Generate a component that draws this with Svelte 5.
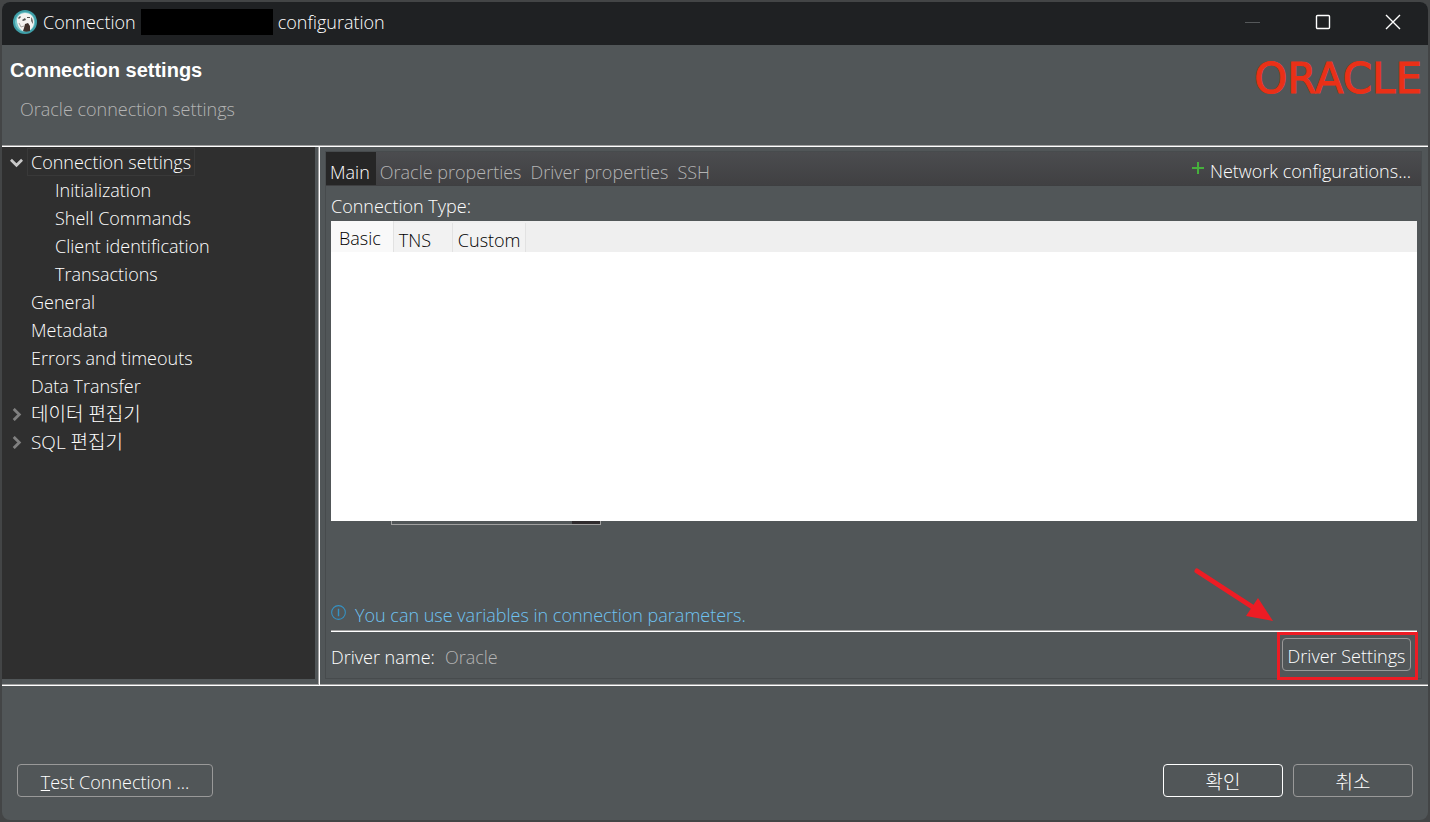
<script>
  const tree = [
    {
      label: 'Connection settings',
      open: true,
      selected: true,
      children: ['Initialization', 'Shell Commands', 'Client identification', 'Transactions']
    },
    { label: 'General' },
    { label: 'Metadata' },
    { label: 'Errors and timeouts' },
    { label: 'Data Transfer' },
    { label: '데이터 편집기', open: false, korean: true },
    { label: 'SQL 편집기', open: false, korean: true }
  ];

  const pages = ['Main', 'Oracle properties', 'Driver properties', 'SSH'];
  const types = ['Basic', 'TNS', 'Custom'];

  let page = $state('Main');
  let type = $state('Basic');
</script>

<div class="backdrop">
  <main class="dialog">
    <header class="titlebar">
      <svg class="app-icon" viewBox="0 0 24 24" aria-hidden="true">
        <circle cx="12" cy="12" r="12" fill="#3f9fa8" />
        <circle cx="12" cy="12" r="10" fill="#7cc8cc" />
        <path d="M4 12C3 7 7 3 12 3c6 0 9 4 9 9 0 4-2 7-5 9l-6 0C6 19 5 16 4 12Z" fill="#f4f2f0" />
        <path d="M5 8l2-2 1 1-2 2ZM9 10l3-2 1 2-3 1ZM14 7l3 0 0 1-3 0Z" fill="#51504f" />
        <path d="M18 7c2 2 2 4 2 7l-2-3Z" fill="#77716e" />
        <path d="M12 14l3-1 2 3 0 5c-3 1-5 1-7 0l1-3Z" fill="#40302b" />
        <path d="M6 13l2 4 3-1" fill="none" stroke="#a8a5a2" />
      </svg>
      <h1 class="title">
        <span>Connection</span>
        <span class="redacted"></span>
        <span>configuration</span>
      </h1>
      <div class="window-buttons">
        <button aria-label="Minimize" disabled>
          <svg viewBox="0 0 16 16"><path d="M0 8.500h15" stroke="#55585a" /></svg>
        </button>
        <button aria-label="Maximize">
          <svg viewBox="0 0 16 16"><rect x="1.500" y="1.500" width="13" height="13" rx="1" stroke="#fff" stroke-width="1.400" /></svg>
        </button>
        <button aria-label="Close">
          <svg viewBox="0 0 16 16"><path d="M1 1l14 14M15 1L1 15" stroke="#fff" stroke-width="1.400" /></svg>
        </button>
      </div>
    </header>

    <section class="banner">
      <div>
        <h2>Connection settings</h2>
        <p>Oracle connection settings</p>
      </div>
      <span class="logo">ORACLE</span>
    </section>

    <div class="body">
      <nav class="tree">
        <ul>
          {#each tree as node}
            <li>
              <button class="node">
                <span class="twisty">
                  {#if node.open}
                    <svg viewBox="0 0 14 14"><path d="M1 4l6 6 6-6" stroke="#c8c8c8" stroke-width="3" /></svg>
                  {:else if node.open === false}
                    <svg viewBox="0 0 14 14"><path d="M4 1l6 6-6 6" stroke="#808080" stroke-width="3" /></svg>
                  {/if}
                </span>
                <span class="label" class:selected={node.selected} class:korean={node.korean}>{node.label}</span>
              </button>
              {#if node.children}
                <ul>
                  {#each node.children as child}
                    <li><button class="node child">{child}</button></li>
                  {/each}
                </ul>
              {/if}
            </li>
          {/each}
        </ul>
      </nav>

      <section class="editor">
        <div class="folder">
          <div class="tabbar">
            <div class="tabs" role="tablist">
              {#each pages as name}
                <button role="tab" aria-selected={page === name} class:active={page === name} onclick={() => (page = name)}>{name}</button>
              {/each}
            </div>
            <button class="network">
              <svg viewBox="0 0 12 12"><path d="M6 0v12M0 6h12" stroke="#46b03c" stroke-width="2" /></svg>
              Network configurations...
            </button>
          </div>

          <div class="page">
            <div class="caption">Connection Type:</div>
            <div class="type-panel">
              <div class="type-tabs" role="tablist">
                {#each types as name}
                  <button role="tab" aria-selected={type === name} class:active={type === name} onclick={() => (type = name)}>{name}</button>
                {/each}
              </div>
            </div>
            <div class="combo-edge"><span></span></div>

            <a class="hint" href="#variables">
              <svg viewBox="0 0 14 14">
                <circle cx="7" cy="7" r="6.400" stroke="#3592c4" />
                <path d="M7 3.500v7" stroke="#3592c4" stroke-width="1.300" />
              </svg>
              You can use variables in connection parameters.
            </a>

            <div class="driver">
              <span>Driver name:</span>
              <span class="driver-name">Oracle</span>
              <div class="callout">
                <button class="btn">Driver Settings</button>
                <svg class="arrow" viewBox="0 0 82 56" aria-hidden="true">
                  <path d="M3 3L60 40" stroke="#ed1c24" stroke-width="5" stroke-linecap="round" />
                  <path d="M79 53L52 48 64 30Z" fill="#ed1c24" />
                </svg>
              </div>
            </div>
          </div>
        </div>
      </section>
    </div>

    <footer class="actions">
      <button class="btn test"><u>T</u>est Connection ...</button>
      <button class="btn primary korean">확인</button>
      <button class="btn korean">취소</button>
    </footer>
  </main>
</div>

<style>
  :global(body) {
    background: #434546;
  }
  .backdrop {
    box-sizing: border-box;
    display: flex;
    min-height: 100vh;
    padding: 2px;
    color: #fff;
    font: 300 18px/28px "Open Sans", "Noto Sans CJK KR", sans-serif;
  }
  .dialog {
    flex: 1;
    min-width: 0;
    display: flex;
    flex-direction: column;
    background: #515658;
    border-radius: 8px;
    overflow: hidden;
  }
  svg {
    display: block;
    flex-shrink: 0;
    fill: none;
  }
  button {
    margin: 0;
    padding: 0;
    border: 0;
    background: none;
    color: inherit;
    font: inherit;
    white-space: nowrap;
  }
  ul {
    margin: 0;
    padding: 0;
    list-style: none;
  }

  .titlebar {
    box-sizing: border-box;
    display: flex;
    align-items: center;
    height: 43px;
    padding: 0 0 3px 11px;
    background: #1f2123;
  }
  .app-icon {
    width: 24px;
    height: 24px;
    margin-right: 6px;
  }
  .title {
    display: flex;
    align-items: center;
    gap: 5px;
    margin: 0;
    font: inherit;
  }
  .redacted {
    width: 132px;
    height: 26px;
    background: #000;
  }
  .window-buttons {
    display: flex;
    margin-left: auto;
  }
  .window-buttons button {
    display: grid;
    place-items: center;
    width: 70px;
    height: 40px;
  }
  .window-buttons svg {
    width: 16px;
    height: 16px;
  }

  .banner {
    display: flex;
    justify-content: space-between;
    height: 101px;
    padding: 0 6px 0 8px;
    border-bottom: 1px solid #fff;
    box-shadow: inset 0 -1px #a0a0a0;
  }
  .banner h2 {
    margin: 11px 0;
    font: bold 20px/28px "Liberation Sans", sans-serif;
  }
  .banner p {
    margin: 0 10px;
    color: #b4b4b4;
  }
  .logo {
    margin-top: 14px;
    color: #ea3017;
    font: 42px/40px "DejaVu Sans", sans-serif;
    -webkit-text-stroke: 1px #ea3017;
  }

  .body {
    flex: 1;
    display: flex;
    border-bottom: 1px solid #fff;
    box-shadow: inset 0 -1px #a0a0a0;
  }
  .tree {
    box-sizing: border-box;
    flex: 0 0 313px;
    margin: 0 4px 6px 0;
    padding-top: 1px;
    background: #2f2f2f;
  }
  .node {
    display: flex;
    align-items: center;
    width: 100%;
    height: 28px;
    text-align: left;
  }
  .twisty {
    width: 25px;
    padding-left: 8px;
    box-sizing: border-box;
  }
  .twisty svg {
    width: 13px;
    height: 13px;
  }
  .label {
    padding: 0 4px;
  }
  .label.selected {
    outline: 1px solid #393939;
    outline-offset: -1px;
  }
  .child {
    padding-left: 53px;
  }
  .korean {
    font-size: 19px;
  }

  .editor {
    flex: 1;
    min-width: 0;
    display: flex;
    padding: 4px 6px 6px 5px;
    border-left: 1px solid #fff;
    box-shadow: -1px 0 #a0a0a0;
  }
  .folder {
    flex: 1;
    min-width: 0;
    display: flex;
    flex-direction: column;
    border: 1px solid #474b4d;
  }
  .tabbar {
    display: flex;
    justify-content: space-between;
    height: 33px;
    border-bottom: 1px solid #3e3f41;
    background: linear-gradient(#4b4c4f, #404042);
  }
  .tabs {
    display: flex;
  }
  .tabs button {
    padding: 6px 5px 0 4px;
    color: #b4b4b4;
  }
  .tabs .active {
    padding-right: 6px;
    background: #262626;
    color: #fff;
  }
  .network {
    display: flex;
    align-items: center;
    gap: 6px;
    padding: 4px 10px 0 0;
  }
  .network svg {
    width: 12px;
    height: 12px;
    margin-bottom: 6px;
  }

  .page {
    flex: 1;
    display: flex;
    flex-direction: column;
    padding: 6px 4px 0 5px;
  }
  .caption {
    height: 29px;
  }
  .type-panel {
    height: 300px;
    background: #fff;
    color: #000;
  }
  .type-tabs {
    display: flex;
    align-items: flex-end;
    height: 31px;
    background: #efefef;
  }
  .type-tabs button {
    box-sizing: border-box;
    min-width: 59px;
    height: 29px;
    padding: 3px 4px 0 5px;
    border-right: 1px solid #e2e2e2;
    background: #f2f2f2;
    text-align: left;
  }
  .type-tabs .active {
    height: 31px;
    padding: 3px 12px 1px 8px;
    background: #f9f9f9;
  }
  .combo-edge {
    box-sizing: border-box;
    width: 210px;
    height: 4px;
    margin-left: 60px;
    border: 1px solid #a0a0a0;
    border-top: 0;
  }
  .combo-edge span {
    display: block;
    width: 28px;
    height: 3px;
    margin-left: auto;
    background: #2f2b2d;
  }
  .hint {
    display: flex;
    gap: 9px;
    margin-top: auto;
    padding-bottom: 2px;
    color: #6fc3f2;
    text-decoration: none;
  }
  .hint svg {
    width: 15px;
    height: 15px;
    margin-top: 4px;
  }
  .driver {
    display: flex;
    align-items: flex-start;
    gap: 10px;
    height: 46px;
    border-top: 1px solid #fff;
    box-shadow: 0 -1px #a0a0a0;
  }
  .driver span {
    padding-top: 11px;
  }
  .driver-name {
    color: #b4b4b4;
  }
  .callout {
    position: relative;
    margin-left: auto;
    margin-right: -1px;
    padding: 3px 4px 6px 2px;
    border: 3px solid #ed1c24;
  }
  .arrow {
    position: absolute;
    right: 139px;
    bottom: 53px;
    width: 82px;
    height: 56px;
  }
  .btn {
    box-sizing: border-box;
    height: 33px;
    min-width: 120px;
    padding: 3px 4px 0;
    border: 1px solid #999;
    border-radius: 4px;
  }
  .callout .btn {
    display: block;
    min-width: 129px;
  }
  .actions {
    display: flex;
    align-items: flex-start;
    gap: 10px;
    height: 56px;
    padding: 78px 15px 0;
  }
  .actions .test {
    min-width: 196px;
    margin-right: auto;
  }
  .actions .primary {
    border-color: #fff;
  }
</style>
